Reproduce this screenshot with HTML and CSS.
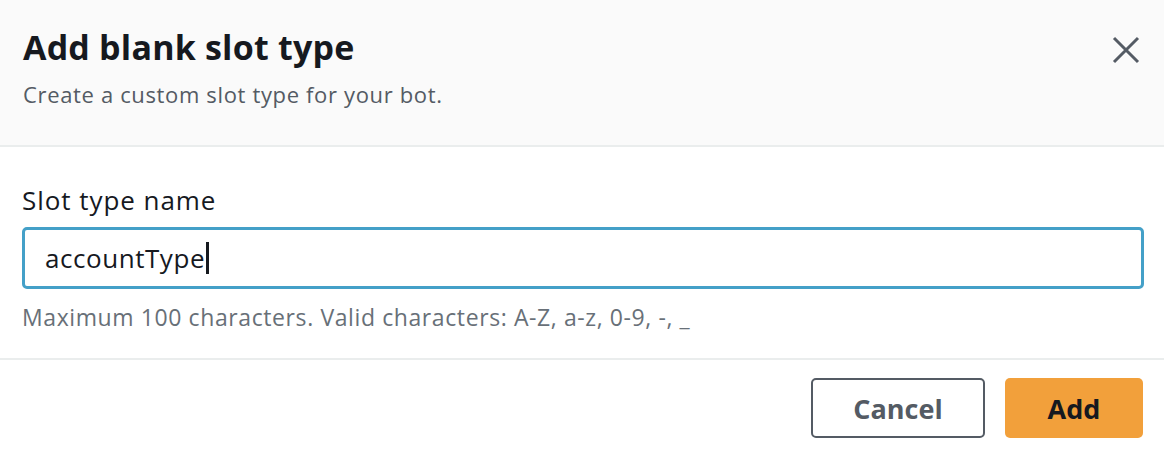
FILE: index.html
```html
<!DOCTYPE html>
<html lang="en">
<head>
    <meta charset="UTF-8">
    <meta name="viewport" content="width=device-width, initial-scale=1.0">
    <title>Add blank slot type</title>
    <link rel="stylesheet" href="styles.css">
</head>
<body>
    <div class="modal">
        <div class="modal-header">
            <div class="header-text">
                <h1>Add blank slot type</h1>
                <p class="subtitle">Create a custom slot type for your bot.</p>
            </div>
            <button class="close-button" aria-label="Close">
                <svg width="28" height="28" viewBox="0 0 28 28">
                    <path d="M2 2 L26 26 M26 2 L2 26" stroke="#545b64" stroke-width="3" fill="none"/>
                </svg>
            </button>
        </div>

        <div class="modal-body">
            <label class="field-label" for="slotTypeName">Slot type name</label>
            <div class="text-input">
                <span class="input-value">accountType</span><span class="caret"></span>
            </div>
            <p class="field-hint">Maximum 100 characters. Valid characters: A-Z, a-z, 0-9, -, _</p>
        </div>

        <div class="modal-footer">
            <button class="btn btn-cancel">Cancel</button>
            <button class="btn btn-primary">Add</button>
        </div>
    </div>
</body>
</html>
```

FILE: styles.css
```css
body {
    margin: 0;
    font-family: 'Open Sans', 'Noto Sans', sans-serif;
    background: #fff;
    color: #16191f;
}

.modal {
    width: 1164px;
    height: 450px;
    background: #fff;
}

/* Шапка */
.modal-header {
    background: #fafafa;
    border-bottom: 2px solid #eaeded;
    height: 145px;
    box-sizing: content-box;
    display: flex;
    justify-content: space-between;
    align-items: flex-start;
    padding: 0 24px 0 23px;
}

.header-text {
    padding-top: 27px;
}

h1 {
    margin: 0;
    font-size: 34px;
    line-height: 40px;
    font-weight: 700;
    letter-spacing: 0.2px;
    color: #16191f;
}

.subtitle {
    margin: 13px 0 0;
    font-size: 22px;
    line-height: 28px;
    letter-spacing: 0.65px;
    color: #545b64;
}

.close-button {
    background: none;
    border: none;
    padding: 0;
    margin-top: 36px;
    cursor: pointer;
    display: flex;
}

/* Поле ввода */
.modal-body {
    padding: 37px 20px 0 22px;
    box-sizing: border-box;
    border-bottom: 2px solid #eaeded;
    height: 213px;
}

.field-label {
    display: block;
    font-size: 26px;
    line-height: 32px;
    letter-spacing: 0.95px;
    color: #16191f;
    margin-bottom: 11px;
}

.text-input {
    height: 62px;
    box-sizing: border-box;
    border: 3px solid #44a0c8;
    border-radius: 5px;
    display: flex;
    align-items: center;
    padding-left: 20px;
    font-size: 26px;
    letter-spacing: 0.55px;
    color: #16191f;
}

.caret {
    display: inline-block;
    width: 3px;
    height: 32px;
    margin-left: 1px;
    background: #16191f;
}

.field-hint {
    margin: 14px 0 0;
    font-size: 23px;
    line-height: 28px;
    letter-spacing: 0.6px;
    color: #687078;
}

/* Кнопки */
.modal-footer {
    display: flex;
    justify-content: flex-end;
    gap: 20px;
    padding: 18px 21px 0;
}

.btn {
    font-family: inherit;
    font-size: 27px;
    font-weight: 700;
    height: 60px;
    border-radius: 5px;
    cursor: pointer;
}

.btn-cancel {
    width: 174px;
    background: #fff;
    color: #545b64;
    border: 2px solid #545b64;
}

.btn-primary {
    width: 138px;
    background: #f2a03b;
    color: #16191f;
    border: none;
}
```
